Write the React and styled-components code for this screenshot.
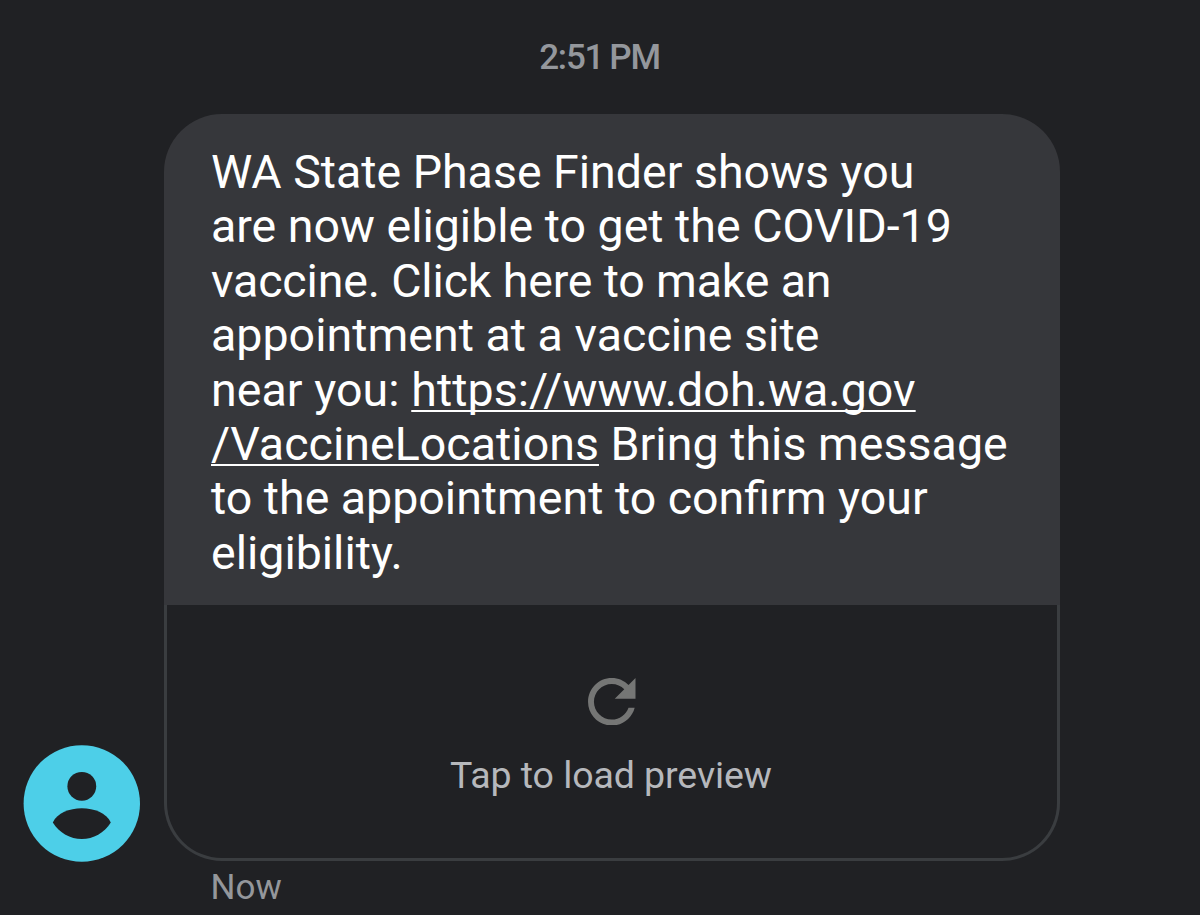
import styled, { createGlobalStyle } from 'styled-components';

const GlobalStyle = createGlobalStyle`
  * {
    box-sizing: border-box;
  }

  body {
    margin: 0;
    background: #202124;
    font-family: Roboto, 'Liberation Sans', sans-serif;
    overflow: hidden;
  }
`;

const Conversation = styled.main`
  display: flex;
  flex-direction: column;
  width: 1200px;
  height: 915px;
  background: #202124;
`;

const Timestamp = styled.time`
  height: 114px;
  padding: 1px 1px 0 0;
  line-height: 114px;
  text-align: center;
  font-size: 35px;
  font-weight: 500;
  letter-spacing: -1.2px;
  word-spacing: -1.5px;
  color: #94979c;
`;

const MessageRow = styled.div`
  display: flex;
  align-items: flex-end;
  gap: 24px;
  padding-left: 23px;
`;

const Avatar = styled.svg`
  flex: none;
  width: 117px;
  height: 117px;
  margin-bottom: -1px;
`;

const Bubble = styled.article`
  width: 896px;
`;

const MessageText = styled.p`
  height: 491px;
  margin: 0;
  padding: 31px 0 0 47px;
  border-radius: 58px 58px 0 0;
  background: #36373b;
  color: #fff;
  font-size: 46.5px;
  line-height: 54.4px;
  white-space: nowrap;
`;

const Line = styled.span`
  display: block;
  letter-spacing: ${props => props.$tracking || 0}px;
`;

const Link = styled.a`
  color: inherit;
  text-decoration: underline;
  text-decoration-thickness: 2.4px;
  text-underline-offset: 4px;
  text-decoration-skip-ink: none;
`;

const Preview = styled.div`
  display: flex;
  flex-direction: column;
  align-items: center;
  height: 256px;
  padding-top: 72.5px;
  border: 3px solid #3a3d40;
  border-top: 0;
  border-radius: 0 0 58px 58px;
`;

const ReloadIcon = styled.svg`
  width: 47.5px;
  height: 47.5px;
`;

const PreviewLabel = styled.span`
  margin-top: 26px;
  padding-right: 2px;
  line-height: 48px;
  font-size: 37.5px;
  letter-spacing: -0.08px;
  color: #b6b8bc;
`;

const Status = styled.span`
  padding-left: 210.5px;
  margin-top: 6px;
  line-height: 42px;
  font-size: 35px;
  color: #94979b;
`;

export default function App() {
  return (
    <>
      <GlobalStyle />
      <Conversation>
        <Timestamp>2:51 PM</Timestamp>
        <MessageRow>
          <Avatar viewBox="0 0 117 117">
            <circle cx="58.8" cy="58.5" r="58.2" fill="#4dcfe8" />
            <circle cx="58.8" cy="41.3" r="14.4" fill="#202124" />
            <path
              d="M29.8 77.5C34.300 68 46.300 63.300 58.800 63.300S83.300 68 87.800 77.500C81.300 88 70.300 94 58.800 94S36.300 88 29.800 77.500Z"
              fill="#202124"
            />
          </Avatar>
          <Bubble>
            <MessageText>
              <Line>WA State Phase Finder shows you</Line>
              <Line>are now eligible to get the COVID-19</Line>
              <Line $tracking={-0.15}>vaccine. Click here to make an</Line>
              <Line $tracking={0.03}>appointment at a vaccine site</Line>
              <Line $tracking={0.07}>
                near you: <Link>https://www.doh.wa.gov</Link>
              </Line>
              <Line $tracking={0.04}>
                <Link>/VaccineLocations</Link> Bring this message
              </Line>
              <Line>to the appointment to confirm your</Line>
              <Line>eligibility.</Line>
            </MessageText>
            <Preview>
              <ReloadIcon viewBox="4 4 16 16" fill="#757675">
                <path d="M17.65 6.35C16.2 4.9 14.21 4 12 4c-4.42 0-7.99 3.58-7.99 8s3.57 8 7.99 8c3.73 0 6.84-2.55 7.73-6h-2.08c-.82 2.33-3.04 4-5.65 4-3.31 0-6-2.69-6-6s2.69-6 6-6c1.66 0 3.14.69 4.22 1.78L13 11h7V4l-2.35 2.35z" />
              </ReloadIcon>
              <PreviewLabel>Tap to load preview</PreviewLabel>
            </Preview>
          </Bubble>
        </MessageRow>
        <Status>Now</Status>
      </Conversation>
    </>
  );
}
